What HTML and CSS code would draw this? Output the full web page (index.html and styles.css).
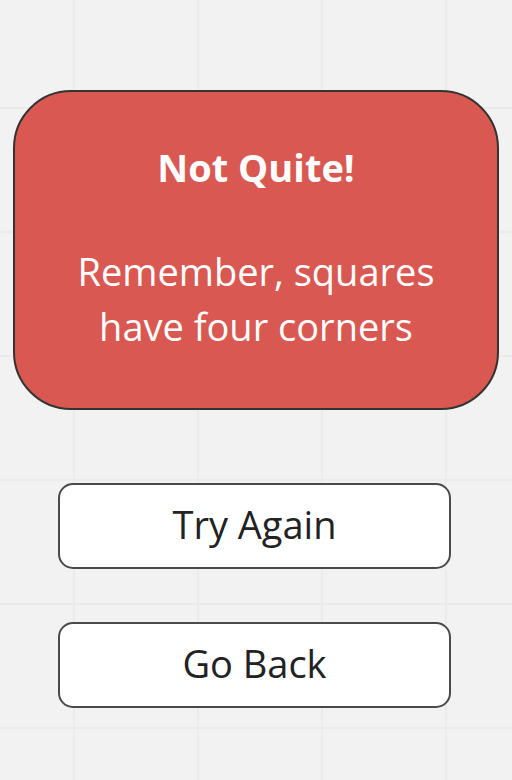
FILE: index.html
```html
<!DOCTYPE html>
<html>
<head>
<meta charset="utf-8">
<link rel="stylesheet" href="styles.css">
</head>
<body>
<main class="screen">
  <section class="card">
    <h1 class="card-title">Not Quite!</h1>
    <p class="card-text">Remember, squares<br>have four corners</p>
  </section>
  <div class="actions">
    <button class="btn">Try Again</button>
    <button class="btn">Go Back</button>
  </div>
</main>
</body>
</html>
```

FILE: styles.css
```css
html, body {
  margin: 0;
  padding: 0;
}
body {
  width: 512px;
  height: 780px;
  overflow: hidden;
  background-color: #f2f2f2;
  background-image:
    linear-gradient(to right, #ebebeb 2px, transparent 2px),
    linear-gradient(to bottom, #ebebeb 2px, transparent 2px);
  background-size: 124px 124px;
  background-position: 73px 107px;
  font-family: "Open Sans", "DejaVu Sans", sans-serif;
}
.screen {
  display: flex;
  flex-direction: column;
  align-items: center;
  padding-top: 90px;
}
.card {
  box-sizing: border-box;
  width: 486px;
  height: 320px;
  background: #d95851;
  border: 2px solid #333;
  border-radius: 58px;
  color: #fff;
  text-align: center;
  padding-top: 51px;
}
.card-title {
  margin: 0;
  font-size: 38px;
  font-weight: 700;
  line-height: 48px;
}
.card-text {
  margin: 53px 0 0;
  font-size: 38px;
  font-weight: 400;
  line-height: 55px;
}
.actions {
  display: flex;
  flex-direction: column;
  gap: 53px;
  margin-top: 73px;
  margin-right: 3px;
}
.btn {
  box-sizing: border-box;
  width: 393px;
  height: 86px;
  background: #fff;
  border: 2px solid #4a4a4a;
  border-radius: 15px;
  font-family: "Open Sans", "DejaVu Sans", sans-serif;
  font-size: 38px;
  line-height: 1;
  color: #222;
  padding: 0 0 4px;
}
```
